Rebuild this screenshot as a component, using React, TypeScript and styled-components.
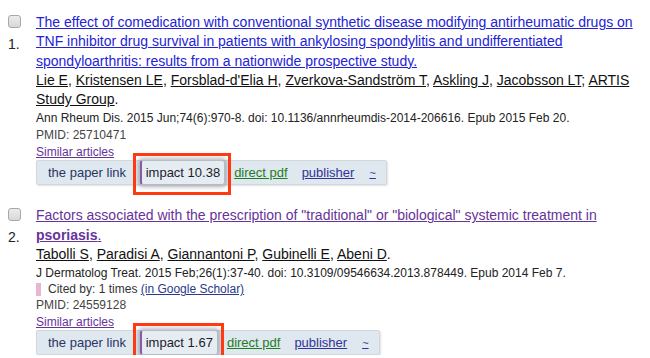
import React from "react";
import styled, { createGlobalStyle } from "styled-components";

const GlobalStyle = createGlobalStyle`
  body {
    margin: 0;
    background: #fff;
    font-family: "Liberation Sans", Arial, sans-serif;
    color: #222;
  }
`;

type Article = {
  num: number;
  title: React.ReactNode;
  visited: boolean;
  authors: string[];
  group?: string;
  source: string;
  citedBy?: number;
  pmid: string;
  impact: string;
};

const articles: Article[] = [
  {
    num: 1,
    title:
      "The effect of comedication with conventional synthetic disease modifying antirheumatic drugs on TNF inhibitor drug survival in patients with ankylosing spondylitis and undifferentiated spondyloarthritis: results from a nationwide prospective study.",
    visited: false,
    authors: ["Lie E", "Kristensen LE", "Forsblad-d'Elia H", "Zverkova-Sandström T", "Askling J", "Jacobsson LT"],
    group: "ARTIS Study Group",
    source: "Ann Rheum Dis. 2015 Jun;74(6):970-8. doi: 10.1136/annrheumdis-2014-206616. Epub 2015 Feb 20.",
    pmid: "25710471",
    impact: "10.38",
  },
  {
    num: 2,
    title: (
      <>
        Factors associated with the prescription of "traditional" or "biological" systemic treatment in <b>psoriasis</b>.
      </>
    ),
    visited: true,
    authors: ["Tabolli S", "Paradisi A", "Giannantoni P", "Gubinelli E", "Abeni D"],
    source: "J Dermatolog Treat. 2015 Feb;26(1):37-40. doi: 10.3109/09546634.2013.878449. Epub 2014 Feb 7.",
    citedBy: 1,
    pmid: "24559128",
    impact: "1.67",
  },
];

const ArticleRow = ({ article }: { article: Article }) => (
  <Row>
    <Side>
      <Check />
      <Num>{article.num}.</Num>
    </Side>
    <Body>
      <Title $visited={article.visited}>{article.title}</Title>
      <Authors>
        {article.authors.map((a, i) => (
          <React.Fragment key={a}>
            {i > 0 && ", "}
            <Author>{a}</Author>
          </React.Fragment>
        ))}
        {article.group ? (
          <>
            ; <Author>{article.group}</Author>.
          </>
        ) : (
          "."
        )}
      </Authors>
      <Source>{article.source}</Source>
      {article.citedBy !== undefined && (
        <Cited>
          <PinkMark />
          Cited by: {article.citedBy} times <ScholarLink>(in Google Scholar)</ScholarLink>
        </Cited>
      )}
      <Pmid>PMID: {article.pmid}</Pmid>
      <Similar>Similar articles</Similar>
      <LinkBar>
        <PaperLink>the paper link</PaperLink>
        <Colon>:</Colon>
        <ImpactBox>
          impact {article.impact}
          <Highlight />
        </ImpactBox>
        <PdfLink>direct pdf</PdfLink>
        <PublisherLink>publisher</PublisherLink>
        <More>~</More>
      </LinkBar>
    </Body>
  </Row>
);

export default function App() {
  return (
    <>
      <GlobalStyle />
      <List>
        {articles.map((a) => (
          <ArticleRow key={a.pmid} article={a} />
        ))}
      </List>
    </>
  );
}

const List = styled.div`
  display: flex;
  flex-direction: column;
  gap: 21px;
  padding: 13px 0 0 0;
`;

const Row = styled.div`
  display: grid;
  grid-template-columns: 36px 1fr;
`;

const Side = styled.div`
  display: flex;
  flex-direction: column;
  align-items: flex-start;
  padding-left: 8px;
`;

const Check = styled.span`
  display: block;
  width: 11px;
  height: 11px;
  margin-top: 2px;
  border: 1px solid #a8a8a8;
  border-radius: 3px;
  background: linear-gradient(#ececec, #d8d8d8);
`;

const Num = styled.span`
  margin-top: 8px;
  font-size: 14px;
  line-height: 16px;
  color: #222;
`;

const Body = styled.div`
  display: flex;
  flex-direction: column;
  align-items: flex-start;
  padding-right: 4px;
`;

const Title = styled.a<{ $visited: boolean }>`
  font-size: 14px;
  line-height: 19.3px;
  color: ${(p) => (p.$visited ? "#663399" : "#2323d6")};
  text-decoration: underline;
  cursor: pointer;
  b {
    font-weight: 700;
  }
`;

const Authors = styled.div`
  font-size: 14px;
  line-height: 19.3px;
  color: #111;
`;

const Author = styled.a`
  color: #111;
  text-decoration: underline;
`;

const Source = styled.div`
  font-size: 12px;
  line-height: 18px;
  color: #222;
`;

const Cited = styled.div`
  display: flex;
  align-items: center;
  font-size: 12px;
  line-height: 15px;
  color: #333;
  white-space: pre;
`;

const PinkMark = styled.span`
  display: inline-block;
  width: 5px;
  height: 13px;
  margin-right: 7px;
  background: #e8b6cf;
`;

const ScholarLink = styled.a`
  color: #2a3a8a;
  text-decoration: underline;
`;

const Pmid = styled.div`
  font-size: 12px;
  line-height: 17px;
  color: #444;
`;

const Similar = styled.a`
  font-size: 12px;
  line-height: 16px;
  color: #663399;
  text-decoration: underline;
`;

const LinkBar = styled.div`
  display: flex;
  align-items: center;
  height: 25px;
  padding: 0 10px 0 11px;
  box-sizing: border-box;
  background: #dfe8ee;
  border: 1px solid #d0d8de;
  border-radius: 2px;
  box-shadow: 1px 1px 2px rgba(0, 0, 0, 0.12);
  font-size: 13px;
`;

const PaperLink = styled.span`
  color: #2b3566;
`;

const Colon = styled.span`
  margin-left: 6px;
  color: #2b3566;
`;

const ImpactBox = styled.span`
  position: relative;
  margin-left: 4px;
  padding: 4px 4px 4px 4px;
  background: #e6edf2;
  border: 1px solid #b4bcc4;
  border-left: 2px solid #8a5aa8;
  border-radius: 3px;
  box-shadow: 0 0 4px 2px rgba(60, 60, 80, 0.35);
  color: #1c1c2c;
`;

const Highlight = styled.span`
  position: absolute;
  left: -9px;
  right: -7px;
  top: -8px;
  bottom: -11px;
  border: 3px solid #ff3a12;
  pointer-events: none;
`;

const PdfLink = styled.a`
  margin-left: 9px;
  color: #1e7d1e;
  text-decoration: underline;
`;

const PublisherLink = styled.a`
  margin-left: 14px;
  color: #333399;
  text-decoration: underline;
`;

const More = styled.a`
  margin-left: 15px;
  font-size: 11px;
  color: #333399;
  text-decoration: underline;
`;
